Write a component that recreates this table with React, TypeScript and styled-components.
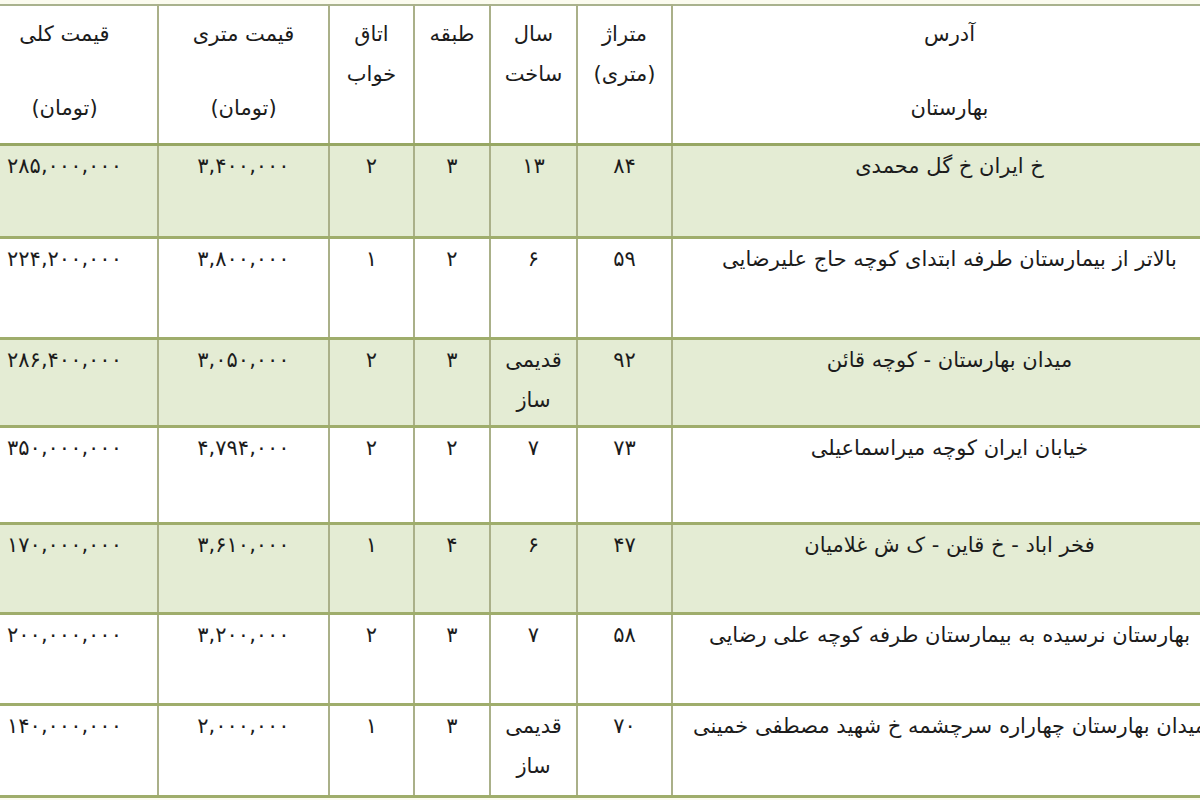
import * as React from 'react'
import styled, { createGlobalStyle } from 'styled-components'

const GlobalStyle = createGlobalStyle`
  html, body {
    margin: 0;
    padding: 0;
    background: #fbfbef;
    overflow: hidden;
  }
`

interface IRow {
  address: string
  area: string
  year: string[]
  floor: string
  rooms: string
  perMeter: string
  total: string
  height: number
  shaded?: boolean
}

const rows: IRow[] = [
  { address: 'خ ایران خ گل محمدی', area: '۸۴', year: ['۱۳'], floor: '۳', rooms: '۲', perMeter: '۳,۴۰۰,۰۰۰', total: '۲۸۵,۰۰۰,۰۰۰', height: 93, shaded: true },
  { address: 'بالاتر از بیمارستان طرفه ابتدای کوچه حاج علیرضایی', area: '۵۹', year: ['۶'], floor: '۲', rooms: '۱', perMeter: '۳,۸۰۰,۰۰۰', total: '۲۲۴,۲۰۰,۰۰۰', height: 101 },
  { address: 'میدان بهارستان - کوچه قائن', area: '۹۲', year: ['قدیمی', 'ساز'], floor: '۳', rooms: '۲', perMeter: '۳,۰۵۰,۰۰۰', total: '۲۸۶,۴۰۰,۰۰۰', height: 88, shaded: true },
  { address: 'خیابان ایران کوچه میراسماعیلی', area: '۷۳', year: ['۷'], floor: '۲', rooms: '۲', perMeter: '۴,۷۹۴,۰۰۰', total: '۳۵۰,۰۰۰,۰۰۰', height: 97 },
  { address: 'فخر اباد - خ قاین - ک ش غلامیان', area: '۴۷', year: ['۶'], floor: '۴', rooms: '۱', perMeter: '۳,۶۱۰,۰۰۰', total: '۱۷۰,۰۰۰,۰۰۰', height: 90, shaded: true },
  { address: 'بهارستان نرسیده به بیمارستان طرفه کوچه علی رضایی', area: '۵۸', year: ['۷'], floor: '۳', rooms: '۲', perMeter: '۳,۲۰۰,۰۰۰', total: '۲۰۰,۰۰۰,۰۰۰', height: 91 },
  { address: 'میدان بهارستان چهاراره سرچشمه خ شهید مصطفی خمینی', area: '۷۰', year: ['قدیمی', 'ساز'], floor: '۳', rooms: '۱', perMeter: '۲,۰۰۰,۰۰۰', total: '۱۴۰,۰۰۰,۰۰۰', height: 92 },
]

// widths right to left: address, area, year, floor, rooms, per meter, total
const colWidths = [555, 95, 87, 76, 85, 171, 187]

export default function App() {
  return (
    <>
      <GlobalStyle />
      <Page>
        <Table dir="rtl">
          <colgroup>
            {colWidths.map((w, i) => <col key={i} style={{ width: w }} />)}
          </colgroup>
          <thead>
            <tr>
              <HeadCell>
                <Line>آدرس</Line>
                <LowLine>بهارستان</LowLine>
              </HeadCell>
              <HeadCell>
                <Line>متراژ</Line>
                <Line>(متری)</Line>
              </HeadCell>
              <HeadCell>
                <Line>سال</Line>
                <Line>ساخت</Line>
              </HeadCell>
              <HeadCell>
                <Line>طبقه</Line>
              </HeadCell>
              <HeadCell>
                <Line>اتاق</Line>
                <Line>خواب</Line>
              </HeadCell>
              <HeadCell>
                <Line>قیمت متری</Line>
                <LowLine>(تومان)</LowLine>
              </HeadCell>
              <HeadCell>
                <Line>قیمت کلی</Line>
                <LowLine>(تومان)</LowLine>
              </HeadCell>
            </tr>
          </thead>
          <tbody>
            {rows.map((r, i) => (
              <Row key={i} shaded={!!r.shaded} style={{ height: r.height }}>
                <Cell>{r.address}</Cell>
                <Cell>{r.area}</Cell>
                <Cell>{r.year.map((y, j) => <Line key={j}>{y}</Line>)}</Cell>
                <Cell>{r.floor}</Cell>
                <Cell>{r.rooms}</Cell>
                <Cell><Num>{r.perMeter}</Num></Cell>
                <Cell><Num>{r.total}</Num></Cell>
              </Row>
            ))}
          </tbody>
        </Table>
      </Page>
    </>
  )
}

const Page = styled.div`
  padding-top: 4px;
  margin-right: -26px;
  margin-left: -30px;
`
const Table = styled.table`
  width: 1256px;
  table-layout: fixed;
  border-collapse: collapse;
  background: #ffffff;
  font-family: "DejaVu Sans", "Noto Sans", sans-serif;
  font-size: 21px;
  color: #1c1c1c;
  border-top: 2px solid #a9b28e;
  border-bottom: 2px solid #a4b079;
`
const HeadCell = styled.th`
  height: 129px;
  vertical-align: top;
  text-align: center;
  font-weight: normal;
  padding: 8px 4px 0;
  line-height: 40px;
  white-space: nowrap;
  border-left: 2px solid #aab089;
  border-right: 2px solid #aab089;
  border-bottom: 3px solid #97a764;
`
const Line = styled.div`
  line-height: 40px;
`
const LowLine = styled.div`
  line-height: 40px;
  margin-top: 34px;
`
const Row = styled.tr<{ shaded: boolean }>`
  background: ${({ shaded }) => (shaded ? '#e4ecd4' : '#ffffff')};
  border-bottom: 3px solid #9fad6c;
`
const Cell = styled.td`
  vertical-align: top;
  text-align: center;
  padding: 0 4px;
  line-height: 40px;
  white-space: nowrap;
  border-left: 2px solid #aab089;
  border-right: 2px solid #aab089;
`
const Num = styled.span`
  direction: ltr;
  unicode-bidi: isolate;
  letter-spacing: 1.5px;
`
